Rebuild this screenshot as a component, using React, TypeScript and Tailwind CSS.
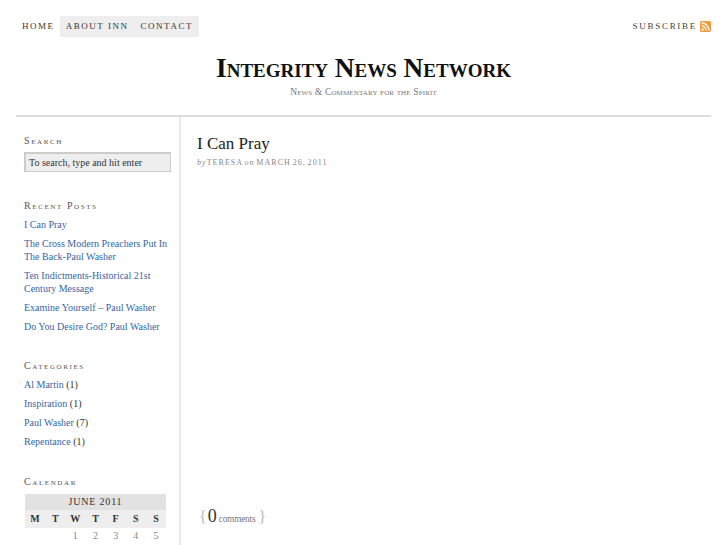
const serif = { fontFamily: '"Liberation Serif", serif' };

function Heading({ children, className = "" }: { children: string; className?: string }) {
  return (
    <h3 className={`text-[10px] leading-[12px] tracking-[0.16em] text-[#555] font-normal [font-variant:small-caps] ${className}`}>
      {children}
    </h3>
  );
}

function BlueLink({ children }: { children: string }) {
  return <a className="text-[#3565a8]">{children}</a>;
}

const recent = [
  "I Can Pray",
  "The Cross Modern Preachers Put In The Back-Paul Washer",
  "Ten Indictments-Historical 21st Century Message",
  "Examine Yourself – Paul Washer",
  "Do You Desire God? Paul Washer",
];
const cats: [string, number][] = [
  ["Al Martin", 1],
  ["Inspiration", 1],
  ["Paul Washer", 7],
  ["Repentance", 1],
];
const days = ["M", "T", "W", "T", "F", "S", "S"];
const nums = ["", "", "1", "2", "3", "4", "5"];

export default function App() {
  return (
    <div style={serif} className="h-[545px] w-[727px] overflow-hidden bg-white px-4 pt-4 text-[#333]">
      <div className="flex items-start justify-between">
        <nav className="flex h-[21px] items-center text-[9px] leading-[21px] tracking-[0.17em] text-[#333]">
          <a className="pl-[6px] pr-[5px]">HOME</a>
          <div className="flex h-[21px] bg-[#eeeeee]">
            <a className="px-[6px]">ABOUT INN</a>
            <a className="px-[6px]">CONTACT</a>
          </div>
        </nav>
        <div className="flex h-[21px] items-center gap-[3px] text-[9px] tracking-[0.19em] text-[#444]">
          <span>SUBSCRIBE</span>
          <svg width="11" height="11" viewBox="0 0 11 11">
            <rect width="11" height="11" rx="1.5" fill="#f59b3c" />
            <circle cx="2.6" cy="8.4" r="1.2" fill="#fff" />
            <path d="M1.6 4.8a4.6 4.6 0 0 1 4.6 4.6" stroke="#fff" strokeWidth="1.3" fill="none" />
            <path d="M1.6 2a7.4 7.4 0 0 1 7.4 7.4" stroke="#fff" strokeWidth="1.3" fill="none" />
          </svg>
        </div>
      </div>

      <header className="h-[67px] border-b-2 border-[#dddddd] text-center">
        <h1 className="mt-[13px] text-[27.3px] font-bold leading-[36px] text-[#111] [font-variant:small-caps]">
          Integrity News Network
        </h1>
        <p className="mt-[1px] text-[9.5px] leading-[10px] tracking-[0.015em] text-[#777] [font-variant:small-caps]">
          News &amp; Commentary for the Spirit
        </p>
      </header>

      <div className="flex">
        <aside className="w-[165px] shrink-0 border-r-2 border-[#eaeaea] pl-2 pr-2 pt-[18px] text-[10px] leading-[13px] pb-10">
          <Heading>Search</Heading>
          <div className="mt-[5px] h-[20px] w-[147px] border border-[#cccccc] border-t-2 border-l-2 bg-[#eeeeee] pl-[3px] text-[10px] leading-[17px] text-[#333]">
            To search, type and hit enter
          </div>

          <Heading className="mt-[28px]">Recent Posts</Heading>
          <ul className="mt-[6px] space-y-[6px]">
            {recent.map((r) => (
              <li key={r}>
                <BlueLink>{r}</BlueLink>
              </li>
            ))}
          </ul>

          <Heading className="mt-[27px]">Categories</Heading>
          <ul className="mt-[6px] space-y-[6px]">
            {cats.map(([n, c]) => (
              <li key={n}>
                <BlueLink>{n}</BlueLink> ({c})
              </li>
            ))}
          </ul>

          <Heading className="mt-[28px]">Calendar</Heading>
          <div className="mt-[6px] w-[141px] ml-[1px]">
            <div className="h-[16px] bg-[#e2e2e2] text-center text-[10px] leading-[15px] tracking-[0.08em]">JUNE 2011</div>
            <div className="grid h-[18px] grid-cols-7 bg-[#eeeeee] text-center font-bold leading-[17px]">
              {days.map((d, i) => (
                <span key={i}>{d}</span>
              ))}
            </div>
            <div className="grid grid-cols-7 text-center leading-[16px] text-[#888]">
              {nums.map((d, i) => (
                <span key={i}>{d}</span>
              ))}
            </div>
          </div>
        </aside>

        <main className="flex h-[430px] flex-1 flex-col pl-[16px] pt-[16px]">
          <h2 className="text-[17px] font-normal leading-[22px] text-[#222]">I Can Pray</h2>
          <p className="mt-[2px] text-[8px] leading-[12px] tracking-[1.05px] text-[#888] [word-spacing:-1.3px]">
            <i>by</i>TERESA <i>on</i> MARCH 26, 2011
          </p>
          <div className="mt-[334px] flex items-baseline">
            <span className="ml-[2px] text-[16px] font-light text-[#bbb]">{"{"}</span>
            <span className="ml-[1px] text-[18px] text-[#333]">0</span>
            <span className="ml-[2px] text-[9.3px] tracking-[-0.02em] text-[#777]">comments</span>
            <span className="ml-[3px] text-[16px] font-light text-[#bbb]">{"}"}</span>
          </div>
        </main>
      </div>
    </div>
  );
}
